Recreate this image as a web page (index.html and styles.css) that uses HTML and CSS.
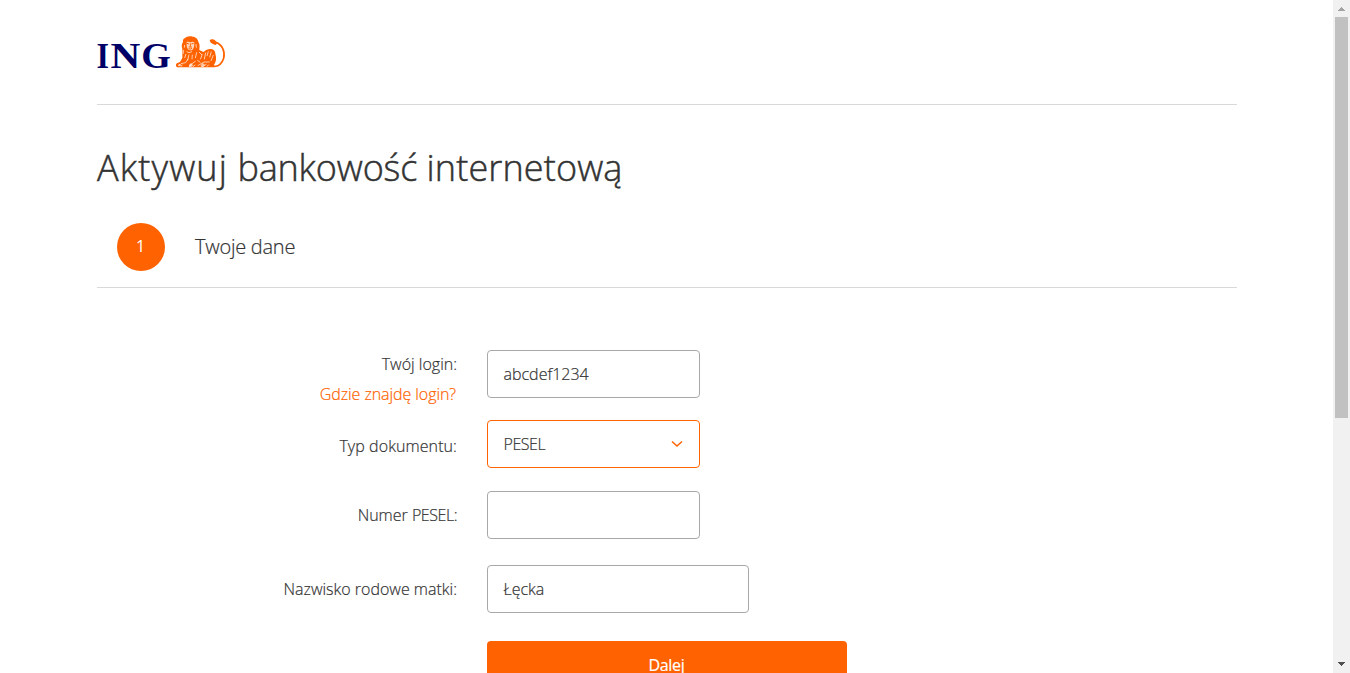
FILE: index.html
```html
<!DOCTYPE html>
<html lang="pl">
<head>
<meta charset="utf-8">
<title>Aktywuj bankowość internetową</title>
<link rel="stylesheet" href="styles.css">
</head>
<body>
<div class="window">
  <main class="page">
    <header class="header">
      <svg class="logo" width="136" height="44" viewBox="0 0 136 44" role="img" aria-label="ING">
        <g class="logo-text">
          <text transform="translate(-0.6 37.5) scale(.88 1)">I</text>
          <text transform="translate(13.4 37.5) scale(1.13 1)">N</text>
          <text transform="translate(44.3 37.5) scale(1.04 1)">G</text>
        </g>
        <g transform="translate(73 0) scale(.33333)">
          <path class="lion" d="M37 57 C34 49 35 42 39 36 C37 26 45 25 49 21 C55 18 63 18 68 20 C78 20 83 27 85 35 C91 44 88 52 88 60 L100 66 C109 59 118 55 126 58 C134 59 136 67 137 76 C140 87 137 99 132 104 L135 112 H21 C16 109 17 101 22 99 L30 96 L37 84 Z"/>
          <path class="tail" d="M133 108 C145 112 157 99 161 85 C166 65 157 43 137 37"/>
          <path class="lion" d="M119 32 C122 27 130 26 135 31 L142 38 L137 45 C132 42 123 42 119 32 Z"/>
          <path class="face" d="M50 36 C55 33 58 37 61 37 C64 37 68 33 73 37 L72 51 C69 60 65 62 60 61 C54 60 51 54 50 47 Z"/>
          <path class="feature" d="M50 40 L57 42 M64 42 L71 40 M61 40 V50 M56 51 H66 M56 56 Q61 59 66 55"/>
          <path class="detail" d="M44 45 L43 53 M78 42 L79 53 M50 65 L57 68 L66 65"/>
          <path class="detail" d="M41 60 L39 72 M48 72 L44 84 M57 74 L53 91 M67 74 L66 88 M80 67 L76 84 M33 101 L47 98 L54 87 M24 108 L30 103 M33 110 L37 104 M57 108 L77 93 M58 111 L65 103 M68 111 L76 104 M83 107 L102 96 L119 96 M98 109 L109 103 M111 110 L116 104 M97 73 L91 88 M107 68 L103 88 M115 64 L111 78 M124 65 L119 82 M130 75 L123 93 M87 66 L96 75 M82 91 L91 97"/>
          <path class="pad" d="M57 104 L63 99 L70 106 L65 111 H58 Z M92 104 L99 99 L105 105 L100 111 H93 Z M25 103 L32 101 L34 107 L27 109 Z"/>
        </g>
      </svg>
    </header>
    <h1 class="title"><span class="title-lead">Aktywuj</span> <span class="title-mid">bankowość</span> internetową</h1>
    <section class="step">
      <span class="step-number">1</span>
      <h2 class="step-name">Twoje dane</h2>
    </section>
    <form class="form">
      <div class="row row-login">
        <div class="label"><span>Twój login:</span><a class="help">Gdzie znajdę login?</a></div>
        <div class="field">abcdef1234</div>
      </div>
      <div class="row row-type">
        <div class="label type-label">Typ dokumentu:</div>
        <div class="field select"><span class="caps">PESEL</span>
          <svg class="chevron" width="12" height="8" viewBox="0 0 12 8"><path d="M1 1.5 L6 6 L11 1.5"/></svg>
        </div>
      </div>
      <div class="row row-pesel">
        <div class="label"><span>Numer <span class="caps">PESEL:</span></span></div>
        <div class="field"></div>
      </div>
      <div class="row row-name">
        <div class="label">Nazwisko rodowe matki:</div>
        <div class="field wide">Łęcka</div>
      </div>
      <button class="submit" type="button">Dalej</button>
    </form>
  </main>
  <div class="scrollbar">
    <svg class="arrow up" width="17" height="17" viewBox="0 0 17 17"><path d="M8 7h1v1h1v1h1v1h1v1H5v-1h1V9h1V8h1z"/></svg>
    <div class="thumb"></div>
    <svg class="arrow down" width="17" height="17" viewBox="0 0 17 17"><path d="M5 6h7v1h-1v1h-1v1H9v1H8V9H7V8H6V7H5z"/></svg>
  </div>
</div>
</body>
</html>
```
FILE: styles.css
```css
* { box-sizing: border-box; }
body {
  margin: 0;
  overflow: hidden;
  background: #fff;
  color: #333;
  font-family: "Open Sans", "Noto Sans", sans-serif;
  font-size: 16px;
  font-weight: 300;
  -webkit-text-stroke: 0.2px currentColor;
}
.window { display: grid; grid-template-columns: 1fr 17px; height: 673px; overflow: hidden; }
.page { padding: 0 96px 0 97px; overflow: hidden; height: 673px; }
.header { height: 105px; padding-top: 30px; border-bottom: 1px solid #d9d9d9; }
.logo { display: block; }
.logo-text { font: bold 36.5px "Liberation Serif", serif; fill: #000066; -webkit-text-stroke: 0; }
.lion { fill: #ff6200; }
.tail { fill: none; stroke: #ff6200; stroke-width: 5; }
.face { fill: #fff; opacity: 0.75; }
.pad { fill: #fff; opacity: 0.6; }
.feature { fill: none; stroke: #ff6200; stroke-width: 3; }
.detail { fill: none; stroke: #fff; stroke-width: 2; }
.title { margin: 0; height: 118px; padding-top: 37px; font-size: 36px; line-height: 52px; font-weight: 300; letter-spacing: 0.13px; white-space: nowrap; -webkit-text-stroke: 0.5px currentColor; }
.title-lead { letter-spacing: 1.13px; }
.title-mid { letter-spacing: -0.18px; }
.step { display: flex; align-items: flex-start; gap: 30px; height: 65px; padding-left: 20px; border-bottom: 1px solid #d9d9d9; }
.step-number { width: 48px; height: 48px; padding-right: 1px; border-radius: 50%; background: #ff6200; color: #fff; font-size: 16px; font-weight: 400; line-height: 46px; text-align: center; -webkit-text-stroke: 0; }
.step-name { margin: 0; font-size: 20px; font-weight: 300; letter-spacing: -0.25px; line-height: 48px; white-space: nowrap; }
.form { padding-top: 62px; }
.row { display: flex; gap: 30px; }
.label { width: 360px; display: flex; flex-direction: column; align-items: flex-end; line-height: 30px; white-space: nowrap; }
.row-login .label { margin-top: -1px; }
.help { color: #ff6200; letter-spacing: -0.07px; padding-right: 1px; }
.field { width: 213px; height: 48px; padding: 0 15.5px; border: 1px solid #a8a8a8; border-radius: 4px; line-height: 46px; }
.wide { width: 262px; }
.select { display: flex; justify-content: space-between; align-items: center; padding-right: 16px; border-color: #ff6200; }
.caps { letter-spacing: -0.45px; }
.chevron path { fill: none; stroke: #ff6200; stroke-width: 1.5; }
.row-login { height: 70px; }
.row-type { height: 71px; }
.row-type .label { padding-top: 11px; }
.type-label { letter-spacing: 0.08px; }
.row-pesel { height: 74px; }
.row-pesel .label, .row-name .label { padding-top: 9px; }
.row-name { height: 76px; }
.submit { display: block; width: 360px; height: 48px; margin-left: 390px; padding: 0 1px 0 0; border: 0; border-radius: 4px; background: #ff6200; color: #fff; font: 400 16px/48px "Open Sans", sans-serif; letter-spacing: -0.3px; }
.scrollbar { display: flex; flex-direction: column; background: #f1f1f1; }
.thumb { width: 13px; height: 401px; margin-left: 2px; background: #c1c1c1; }
.arrow { display: block; }
.up { fill: #a3a3a3; }
.down { margin-top: auto; fill: #505050; }
```
